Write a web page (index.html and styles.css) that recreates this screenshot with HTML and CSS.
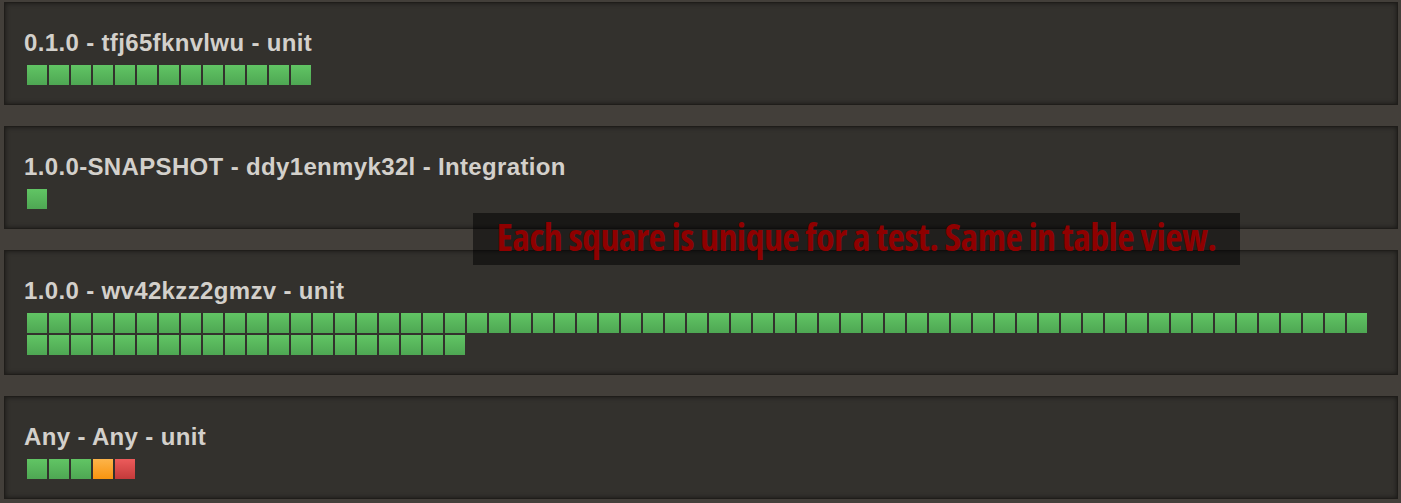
FILE: index.html
```html
<!DOCTYPE html>
<html lang="en">
<head>
<meta charset="utf-8">
<title>Test results</title>
<link rel="stylesheet" href="styles.css">
</head>
<body>
<div class="list">
  <section class="panel">
    <h2 class="title">0.1.0 - tfj65fknvlwu - unit</h2>
    <div class="squares" data-pass="13"></div>
  </section>
  <section class="panel">
    <h2 class="title">1.0.0-SNAPSHOT - ddy1enmyk32l - Integration</h2>
    <div class="squares" data-pass="1"></div>
  </section>
  <section class="panel">
    <h2 class="title">1.0.0 - wv42kzz2gmzv - unit</h2>
    <div class="squares" data-pass="81"></div>
  </section>
  <section class="panel">
    <h2 class="title">Any - Any - unit</h2>
    <div class="squares" data-pass="3" data-warn="1" data-fail="1"></div>
  </section>
</div>
<div class="note">Each square is unique for a test. Same in table view.</div>
<script src="app.js"></script>
</body>
</html>
```
FILE: styles.css
```css
html, body {
  margin: 0;
  padding: 0;
}
body {
  background: #433f3a;
  width: 1401px;
  height: 503px;
  overflow: hidden;
  position: relative;
  font-family: "Liberation Sans", Arial, sans-serif;
}
.list {
  display: flex;
  flex-direction: column;
  gap: 21px;
  padding: 2px 3px 0 4px;
}
.panel {
  background: #33312d;
  border: 1px solid #1f1d1a;
  box-shadow: inset 0 0 5px rgba(0, 0, 0, 0.55);
  padding: 26px 19px 19px 19px;
}
.title {
  margin: 0 0 8px 0;
  font-size: 24px;
  line-height: 28px;
  font-weight: bold;
  letter-spacing: 0.35px;
  color: #d3d0cb;
}
.squares {
  display: flex;
  flex-wrap: wrap;
  gap: 2px;
  margin-left: 3px;
  width: 1350px;
}
.sq {
  width: 20px;
  height: 20px;
  background: linear-gradient(#61c564, #4ea753);
}
.sq.warn {
  background: linear-gradient(#fdb44a, #f7940f);
}
.sq.fail {
  background: linear-gradient(#ec5b5b, #c43a3a);
}
.note {
  position: absolute;
  left: 473px;
  top: 213px;
  width: 767px;
  height: 52px;
  background: rgba(0, 0, 0, 0.5);
  color: #8f0000;
  font-family: "Open Sans", sans-serif;
  font-stretch: condensed;
  font-weight: bold;
  font-size: 38px;
  line-height: 47px;
  text-align: center;
  letter-spacing: -0.6px;
}
```
FILE: app.js
```js
document.querySelectorAll('.squares').forEach(function (box) {
  var kinds = [['pass', ''], ['warn', 'warn'], ['fail', 'fail']];
  kinds.forEach(function (k) {
    var n = parseInt(box.dataset[k[0]] || '0', 10);
    for (var i = 0; i < n; i++) {
      var s = document.createElement('span');
      s.className = 'sq' + (k[1] ? ' ' + k[1] : '');
      box.appendChild(s);
    }
  });
});
```
